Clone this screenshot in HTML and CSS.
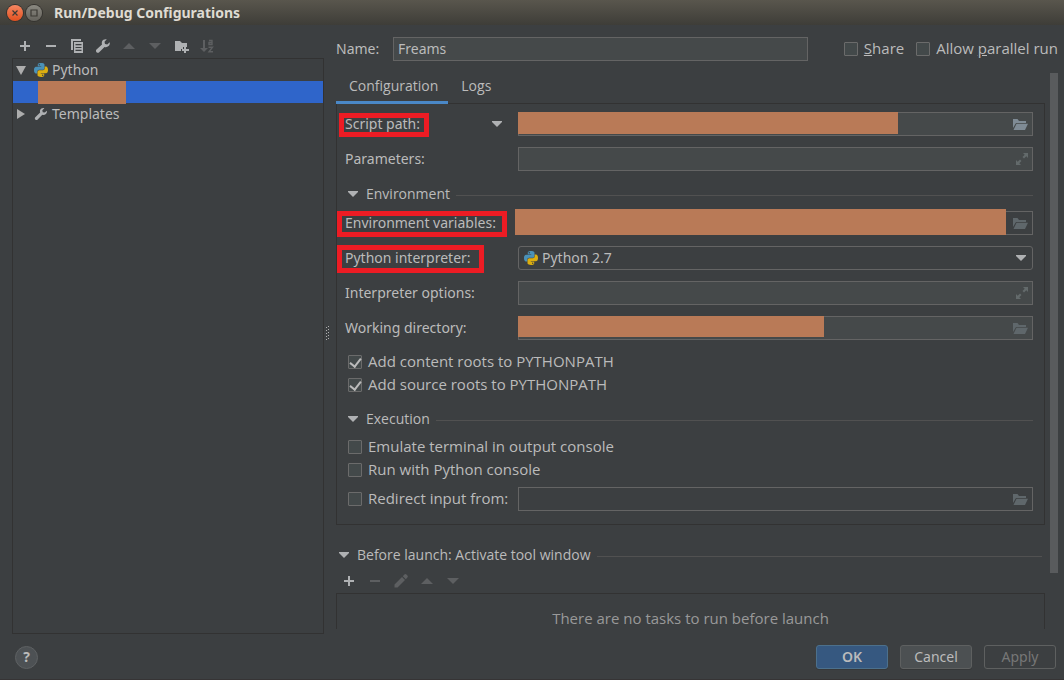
FILE: index.html
```html
<!DOCTYPE html>
<html lang="en">
<head>
<meta charset="utf-8">
<title>Run/Debug Configurations</title>
<link rel="stylesheet" href="styles.css">
</head>
<body>
<svg class="defs" aria-hidden="true">
  <symbol id="python" viewBox="0 0 14 14">
    <path fill="#4a91b8" fill-rule="evenodd" d="M7 0C3.6 0 3.8 1.5 3.8 1.5V3.2H7.2V3.7H2.4S0 3.4 0 7C0 10.6 2.1 10.5 2.1 10.5H3.3V8.8S3.2 6.8 5.3 6.8H8.6S10.5 6.8 10.5 4.9V1.9S10.8 0 7 0ZM5.3 1a.7.7 0 1 1 0 1.4a.7.7 0 0 1 0-1.4Z"/>
    <path fill="#dcae10" fill-rule="evenodd" transform="rotate(180 7 7)" d="M7 0C3.6 0 3.8 1.5 3.8 1.5V3.2H7.2V3.7H2.4S0 3.4 0 7C0 10.6 2.1 10.5 2.1 10.5H3.3V8.8S3.2 6.8 5.3 6.8H8.6S10.5 6.8 10.5 4.9V1.9S10.8 0 7 0ZM5.3 1a.7.7 0 1 1 0 1.4a.7.7 0 0 1 0-1.4Z"/>
  </symbol>
  <symbol id="wrench" viewBox="0 0 16 16"><path fill="currentColor" d="M14.7 4.2 12.3 6.4 10 5.9 9.5 3.7 11.8 1.3C9.800 .8 7.700 1.700 7 3.500C6.600 4.500 6.700 5.500 7 6.400L1.500 11.600C.8 12.300 .8 13.500 1.500 14.200C2.300 15 3.400 15 4.200 14.200L9.500 8.900C10.800 9.400 12.500 9.100 13.600 8C14.700 7 15 5.500 14.700 4.200Z"/></symbol>
  <symbol id="plus" viewBox="0 0 16 16"><path fill="currentColor" d="M7 3h2v4h4v2H9v4H7V9H3V7h4z"/></symbol>
  <symbol id="minus" viewBox="0 0 16 16"><path fill="currentColor" d="M3 7h10v2H3z"/></symbol>
  <symbol id="up" viewBox="0 0 16 16"><path fill="currentColor" d="M8 5l6 6H2z"/></symbol>
  <symbol id="down" viewBox="0 0 16 16"><path fill="currentColor" d="M8 11L2 5h12z"/></symbol>
  <symbol id="caret" viewBox="0 0 10 6"><path fill="currentColor" d="M0 0h10v1L5 6 0 1z"/></symbol>
  <symbol id="folder" viewBox="0 0 15 11"><path fill="currentColor" d="M0 0h4.500l1.500 2h7v2H3L0 9z M3.500 4.700H15L12 11H.500z"/></symbol>
  <symbol id="expand" viewBox="0 0 12 12"><path fill="currentColor" d="M7 0h5v5l-1.700-1.700-2.300 2.200-1.500-1.500L8.700 1.700zM5 12H0V7l1.700 1.700L4 6.500 5.500 8 3.300 10.300z"/></symbol>
</svg>

<header class="titlebar">
  <button class="window-button close" aria-label="Close"><svg viewBox="0 0 16 16"><path d="M5.500 5.500l5 5m0-5l-5 5"/></svg></button>
  <button class="window-button" aria-label="Maximize"><svg viewBox="0 0 16 16"><path d="M5 5h6v6H5z"/></svg></button>
  <h1>Run/Debug Configurations</h1>
</header>

<main class="workspace">
  <aside class="sidebar">
    <div class="toolbar">
      <button aria-label="Add"><svg><use href="#plus"/></svg></button>
      <button aria-label="Remove"><svg><use href="#minus"/></svg></button>
      <button aria-label="Copy"><svg viewBox="0 0 16 16"><path fill="currentColor" fill-rule="evenodd" d="M2 1h10v2H4v9H2zM5 4h9v11H5zM6.500 6h6v1.200h-6zM6.500 8.900h6v1.200h-6zM6.500 11.800h6v1.200h-6z"/></svg></button>
      <button aria-label="Edit templates"><svg><use href="#wrench"/></svg></button>
      <button aria-label="Move up" disabled><svg><use href="#up"/></svg></button>
      <button aria-label="Move down" disabled><svg><use href="#down"/></svg></button>
      <button aria-label="New folder"><svg viewBox="0 0 16 16"><path fill="currentColor" d="M2 3h5l2 2h5v4h-4v2H8v2H2zM11 9h2v2h3v2h-3v2h-2v-2H9v-2h2z"/></svg></button>
      <button aria-label="Sort" disabled><svg viewBox="0 0 16 16"><path fill="currentColor" d="M4 2h2v8h3l-4 4-4-4h3z"/><path fill="none" stroke="currentColor" stroke-width="1.400" d="M10 2.500h3v4h-3V4.500h3M9.500 9.200h4l-3.500 4.600h4"/></svg></button>
    </div>
    <ul class="tree">
      <li><svg class="arrow" viewBox="0 0 10 10"><path d="M0 1h10L5 10z"/></svg><svg class="kind"><use href="#python"/></svg>Python</li>
      <li class="selected"><span class="mask"></span></li>
      <li><svg class="arrow" viewBox="0 0 10 10"><path d="M1 0v10l8-5z"/></svg><svg class="kind"><use href="#wrench"/></svg>Templates</li>
    </ul>
  </aside>
  <div class="splitter"><svg viewBox="0 0 4 15"><path fill="none" stroke="#b0b0b0" stroke-dasharray="1 2" d="M.5 1v14M2.500 0v15"/></svg></div>

  <section class="editor">
    <div class="name-row">
      <label class="name-label" for="name">Name:</label>
      <input class="text" id="name" type="text" value="Freams">
      <label class="check share"><input type="checkbox"><span><u>S</u>hare</span></label>
      <label class="check"><input type="checkbox"><span>Allow <u>p</u>arallel run</span></label>
    </div>
    <div class="scroll">
      <div class="content">
        <nav class="tabs">
          <button class="active">Configuration</button>
          <button>Logs</button>
        </nav>
        <div class="panel">
          <div class="row">
            <label class="marked snug" for="script">Script path:</label>
            <button class="mode" aria-label="Choose script or module"><svg class="caret"><use href="#caret"/></svg></button>
            <div class="field"><input id="script" type="text"><span class="mask script-mask"></span><svg class="folder bright"><use href="#folder"/></svg></div>
          </div>
          <div class="row">
            <label for="params">Parameters:</label>
            <div class="field"><input id="params" type="text"><svg class="expand"><use href="#expand"/></svg></div>
          </div>
          <h2><svg class="caret"><use href="#caret"/></svg>Environment</h2>
          <div class="row first">
            <label class="marked" for="env">Environment variables:</label>
            <div class="field plain"><input id="env" type="text"><span class="mask env-mask"></span><svg class="folder"><use href="#folder"/></svg></div>
          </div>
          <div class="row">
            <label class="marked wide" for="interpreter">Python interpreter:</label>
            <div class="field plain combo"><svg class="python"><use href="#python"/></svg><select id="interpreter"><option>Python 2.7</option></select><svg class="caret"><use href="#caret"/></svg></div>
          </div>
          <div class="row">
            <label for="options">Interpreter options:</label>
            <div class="field"><input id="options" type="text"><svg class="expand"><use href="#expand"/></svg></div>
          </div>
          <div class="row">
            <label for="workdir">Working directory:</label>
            <div class="field"><input id="workdir" type="text"><span class="mask workdir-mask"></span><svg class="folder"><use href="#folder"/></svg></div>
          </div>
          <div class="checks">
            <label class="check"><input type="checkbox" checked><span>Add content roots to PYTHONPATH</span></label>
            <label class="check"><input type="checkbox" checked><span>Add source roots to PYTHONPATH</span></label>
          </div>
          <h2><svg class="caret"><use href="#caret"/></svg>Execution</h2>
          <div class="checks tight">
            <label class="check"><input type="checkbox"><span>Emulate terminal in output console</span></label>
            <label class="check"><input type="checkbox"><span>Run with Python console</span></label>
          </div>
          <div class="row redirect">
            <label class="check"><input type="checkbox"><span>Redirect input from:</span></label>
            <div class="field plain"><input type="text" aria-label="Redirect input from"><svg class="folder"><use href="#folder"/></svg></div>
          </div>
        </div>
        <h2 class="launch"><svg class="caret"><use href="#caret"/></svg>Before launch: Activate tool window</h2>
        <div class="toolbar">
          <button aria-label="Add task"><svg><use href="#plus"/></svg></button>
          <button aria-label="Remove task" disabled><svg><use href="#minus"/></svg></button>
          <button aria-label="Edit task" disabled><svg viewBox="0 0 16 16"><path fill="currentColor" d="M1.500 11.500L9 4l3 3-7.500 7.500h-3zM9.800 3.200l1.600-1.600q1-1 2 0l1 1q1 1 0 2l-1.600 1.600z"/></svg></button>
          <button aria-label="Move task up" disabled><svg><use href="#up"/></svg></button>
          <button aria-label="Move task down" disabled><svg><use href="#down"/></svg></button>
        </div>
        <div class="tasks">There are no tasks to run before launch</div>
      </div>
      <div class="scrollbar"><div class="thumb"></div></div>
    </div>
  </section>
</main>

<footer class="footer">
  <button class="help" aria-label="Help">?</button>
  <button class="action primary">OK</button>
  <button class="action">Cancel</button>
  <button class="action" disabled>Apply</button>
</footer>
</body>
</html>
```
FILE: styles.css
```css
* { box-sizing: border-box; }

body {
  margin: 0;
  height: 100vh;
  display: flex;
  flex-direction: column;
  overflow: hidden;
  background: #3c3f41;
  border-bottom: 1px solid #363435;
  color: #bbbbbb;
  font: 14px/20px "Noto Sans", sans-serif;
}

button, input, select { font: inherit; color: inherit; }
button { padding: 0; border: 0; background: none; }
svg { display: block; flex: none; }
.defs { position: absolute; width: 0; height: 0; }

/* Title bar */
.titlebar {
  flex: none;
  height: 25px;
  display: flex;
  align-items: center;
  gap: 3px;
  padding-left: 7px;
  background: linear-gradient(#59564d, #3e3d38);
}
.titlebar h1 {
  margin: 0 0 0 9px;
  font: bold 14px/20px "Noto Sans", sans-serif;
  color: #dfdbd2;
}
.window-button {
  width: 16px;
  height: 16px;
  border-radius: 50%;
  background: linear-gradient(#8b8981, #64625c);
  box-shadow: 0 0 0 1px #35332f;
}
.window-button.close { background: linear-gradient(#f58762, #e2501f); }
.window-button path { fill: none; stroke: #3c3a35; stroke-width: 1.2; }

.workspace { flex: 1; min-height: 0; display: flex; padding: 0 6px 0 12px; }

/* Configuration tree */
.sidebar { width: 312px; flex: none; display: flex; flex-direction: column; padding-top: 8px; }
.toolbar { display: flex; flex: none; height: 25px; }
.toolbar button { width: 26px; display: flex; align-items: center; justify-content: center; color: #afb1b3; }
.toolbar button:disabled { color: #5d5f61; }
.toolbar svg { width: 16px; height: 16px; }
.tree { flex: 1; margin: 0; padding: 0; list-style: none; border: 1px solid #323232; }
.tree li { height: 22px; display: flex; align-items: center; padding-left: 3px; }
.tree .selected { background: #2f65ca; padding-left: 25px; }
.selected .mask { align-self: flex-start; width: 88px; height: 23px; }
.arrow { width: 10px; height: 10px; fill: #adadad; }
.kind { width: 14px; height: 14px; margin: 0 4px 0 8px; color: #afb1b3; }
.mask { background: #b97a57; z-index: 1; }
.splitter { width: 12px; flex: none; display: flex; align-items: center; padding-left: 2px; }
.splitter svg { width: 4px; height: 15px; margin-top: 8px; }

/* Editor */
.editor { flex: 1; min-width: 0; display: flex; flex-direction: column; padding: 12px 0 5px; }
.name-row { display: flex; align-items: center; margin-bottom: 12px; }
.name-label { width: 57px; }
.text {
  flex: 1;
  min-width: 0;
  height: 24px;
  padding: 0 4px 1px;
  border: 1px solid #646464;
  background: #45494a;
}
.share { margin: 0 12px 0 36px; }
.check { display: flex; align-items: center; gap: 6px; }
.check input {
  appearance: none;
  flex: none;
  width: 14px;
  height: 14px;
  margin: 0;
  border: 1px solid #6b6b6b;
  border-radius: 1px;
  background: #43494a;
}
.check input:checked::before {
  content: "";
  display: block;
  width: 5px;
  height: 9px;
  margin: 0 0 0 3px;
  border: solid #bbbbbb;
  border-width: 0 2px 2px 0;
  transform: rotate(38deg);
}
.scroll { flex: 1; min-height: 0; display: flex; gap: 5px; overflow: hidden; }
.content { flex: 1; min-width: 0; }
.scrollbar { width: 8px; }
.thumb { height: 90%; background: #595b5d; }

.tabs { display: flex; height: 31px; margin-bottom: -1px; position: relative; font-family: "Open Sans", sans-serif; }
.tabs button { padding: 0 10px 2px 13px; border-bottom: 3px solid transparent; }
.tabs .active { border-color: #4a88c7; }

.check, .tasks { font: 15px/20px "Open Sans", sans-serif; white-space: nowrap; }
.check span { padding-bottom: 2px; }

.panel { border: 1px solid #323232; padding: 8px 11px 13px 8px; }
.row { display: flex; align-items: center; height: 24px; margin-top: 11px; }
.row:first-child { margin-top: 0; }
.row.first { margin-top: 5px; }
.row.redirect { margin-top: 6px; }
.row .check { width: 170px; margin-left: 3px; }
.field {
  position: relative;
  flex: none;
  width: calc(100% - 173px);
  height: 24px;
  margin-left: auto;
  display: flex;
  align-items: center;
  border: 1px solid #646464;
  background: #45494a;
}
.field input { flex: 1; min-width: 0; height: 22px; border: 0; padding: 0 5px; background: none; }
.plain { background: none; }
.folder { width: 15px; height: 11px; margin-right: 4px; color: #5f676b; }
.folder.bright { color: #7f8b95; }
.expand { width: 12px; height: 12px; margin-right: 4px; color: #636a6b; }
.caret { width: 10px; height: 6px; color: #afb1b3; }
.mode { margin: 0 16px 0 auto; }
.mode + .field { margin-left: 0; }
.combo { border-radius: 3px; padding: 0 6px 0 5px; }
.combo select { flex: 1; appearance: none; height: 22px; padding: 0 0 0 4px; border: 0; background: none; }
.python { width: 14px; height: 14px; }

/* Redacted values */
.field .mask { position: absolute; top: -1px; left: -1px; }
.field .script-mask { width: 74%; height: 22px; }
.field .env-mask { top: -3px; left: -4px; width: calc(100% - 22px); height: 26px; }
.field .workdir-mask { width: 306px; height: 21px; }

/* Highlighted labels */
.marked { position: relative; line-height: 24px; }
.marked::after {
  content: "";
  position: absolute;
  inset: 0 -11px -2px -8px;
  border: 5px solid #ed1c24;
}
.marked.snug::after { inset: 1px -9px -1px -6px; }
.marked.wide::after { inset: -1px -13px -3px -8px; }

h2 {
  display: flex;
  align-items: center;
  height: 24px;
  margin: 11px 0 0 3px;
  font: 14px/20px "Open Sans", sans-serif;
}
h2 .caret { margin-right: 8px; }
h2::after { content: ""; flex: 1; height: 1px; margin: 2px 0 0 6px; background: #515151; }
.checks { margin: 10px 0 0 3px; }
.checks .check { height: 23px; }
.checks.tight { margin: 4px 0 0 3px; }
h2.launch { margin: 18px 3px 1px; }
.tasks { border: 1px solid #323232; height: 120px; padding-top: 14px; text-align: center; color: #999999; }

/* Footer */
.footer { flex: none; display: flex; align-items: center; gap: 12px; padding: 11px 8px 10px 15px; }
.help {
  width: 23px;
  height: 23px;
  margin-right: auto;
  border: 1px solid #5e6163;
  border-radius: 50%;
  background: #4d5154;
  font-weight: bold;
  line-height: 20px;
}
.action {
  min-width: 72px;
  height: 24px;
  border: 1px solid #5e6060;
  border-radius: 3px;
  background: #4c5052;
  box-shadow: 0 1px 0 #363839;
}
.action.primary { background: #365880; border-color: #4c708c; font-weight: 600; }
.action:disabled { background: none; box-shadow: none; color: #777777; }
```
